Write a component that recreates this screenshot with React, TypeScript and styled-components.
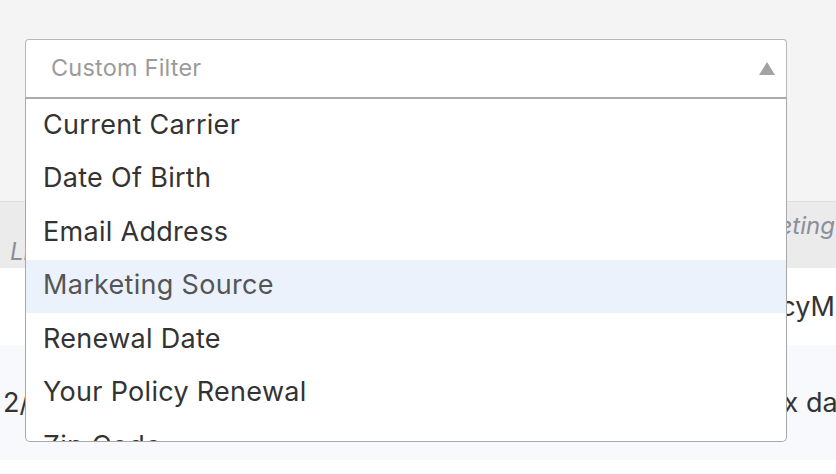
import React from "react";
import styled, { createGlobalStyle } from "styled-components";

const GlobalStyle = createGlobalStyle`
  * { box-sizing: border-box; }
  html, body {
    margin: 0;
    padding: 0;
    background: #ffffff;
    font-family: Inter, "Noto Sans", "Liberation Sans", sans-serif;
  }
`;

const Page = styled.div`
  width: 836px;
  height: 474px;
  overflow: hidden;
  background: #ffffff;
`;

const FilterArea = styled.div`
  height: 201px;
  padding: 39px 49px 0 25px;
  background: #f4f4f4;
`;

const Select = styled.div`
  position: relative;
  width: 762px;
`;

const Control = styled.div`
  display: flex;
  align-items: center;
  justify-content: space-between;
  height: 58px;
  padding: 0 11px 2px 25px;
  background: #ffffff;
  border: 1px solid #b8b8b8;
  border-bottom: none;
  border-radius: 4px 4px 0 0;
`;

const Placeholder = styled.span`
  font-size: 23.5px;
  letter-spacing: 0.2px;
  color: #9b9b9b;
`;

const Caret = styled.span`
  margin-top: 2px;
  width: 0;
  height: 0;
  border-left: 8px solid transparent;
  border-right: 8px solid transparent;
  border-bottom: 13px solid #a3a3a3;
`;

const Menu = styled.ul`
  position: absolute;
  top: 100%;
  left: 0;
  right: 0;
  z-index: 2;
  height: 345px;
  margin: 0;
  padding: 0;
  list-style: none;
  overflow: hidden;
  background: #ffffff;
  border: 1px solid #a8a8a8;
  border-top: 2px solid #ababab;
  border-radius: 0 0 5px 5px;
`;

const Option = styled.li<{ $active?: boolean }>`
  height: 53.5px;
  display: flex;
  align-items: center;
  padding: 0 0 3px 17px;
  font-size: 27px;
  letter-spacing: 0.3px;
  color: ${(p) => (p.$active ? "#555" : "#333")};
  background: ${(p) => (p.$active ? "#ebf2fc" : "transparent")};
  white-space: nowrap;
`;

const Table = styled.div`
  display: flex;
  flex-direction: column;
`;

const Row = styled.div<{ $h: number; $bg: string }>`
  display: grid;
  grid-template-columns: 700px 1fr;
  height: ${(p) => p.$h}px;
  background: ${(p) => p.$bg};
`;

const HeaderRow = styled(Row)`
  border-top: 1px solid #dedede;
`;

const Cell = styled.div<{ $pad?: number }>`
  display: flex;
  align-items: center;
  padding-left: ${(p) => p.$pad ?? 3}px;
  overflow: hidden;
  white-space: nowrap;
  font-size: 27px;
  color: #333;
`;

const HeadCell = styled.div<{ $pad?: number; $bottom?: number }>`
  display: flex;
  align-items: flex-end;
  padding: 0 0 ${(p) => p.$bottom ?? 2}px ${(p) => p.$pad ?? 10}px;
  overflow: hidden;
  white-space: nowrap;
  font-size: 24px;
  font-style: italic;
  color: #8a8f9a;
`;

const options = [
  "Current Carrier",
  "Date Of Birth",
  "Email Address",
  "Marketing Source",
  "Renewal Date",
  "Your Policy Renewal",
  "Zip Code",
];

export default function App() {
  return (
    <Page>
      <GlobalStyle />
      <FilterArea>
        <Select>
          <Control>
            <Placeholder>Custom Filter</Placeholder>
            <Caret />
          </Control>
          <Menu>
            {options.map((o) => (
              <Option key={o} $active={o === "Marketing Source"}>
                {o}
              </Option>
            ))}
          </Menu>
        </Select>
      </FilterArea>
      <Table>
        <HeaderRow $h={67} $bg="#ebebeb">
          <HeadCell>Line of Business</HeadCell>
          <HeadCell $pad={20} $bottom={28}>Marketing Source</HeadCell>
        </HeaderRow>
        <Row $h={77} $bg="#ffffff">
          <Cell></Cell>
          <Cell $pad={34}>PolicyMatch</Cell>
        </Row>
        <Row $h={115} $bg="#f8f9fc">
          <Cell>2/14/2023</Cell>
          <Cell $pad={44}>Max days</Cell>
        </Row>
      </Table>
    </Page>
  );
}
